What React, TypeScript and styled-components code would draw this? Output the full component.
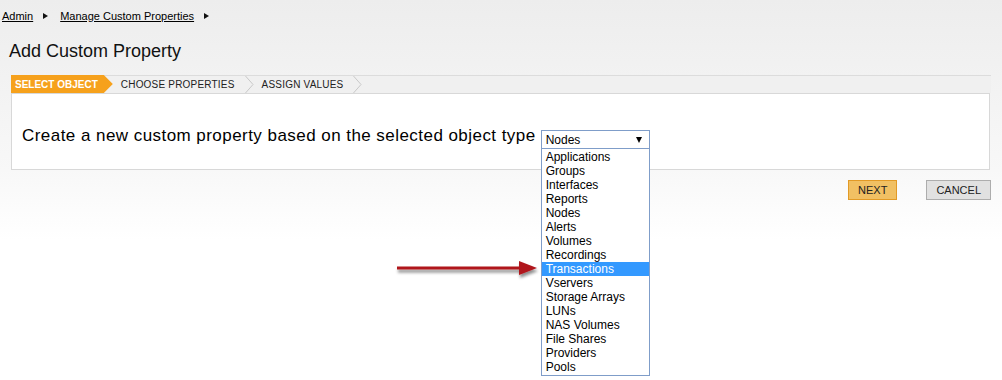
import styled, { createGlobalStyle } from "styled-components";

const GlobalStyle = createGlobalStyle`
  html, body {
    margin: 0;
    padding: 0;
  }

  body {
    font-family: "Liberation Sans", Arial, sans-serif;
    color: #000;
  }
`;

const Page = styled.div`
  position: relative;
  min-height: 380px;
  background: linear-gradient(to bottom, #ededed 0px, #f8f8f8 170px, #ffffff 240px);
  overflow: hidden;
`;

const Breadcrumb = styled.div`
  display: flex;
  align-items: center;
  padding: 9px 2px;
  font-size: 11px;
  line-height: 14px;
`;

const Crumb = styled.a`
  color: #000;
  text-decoration: underline;
  cursor: pointer;
`;

const CrumbArrow = styled.span`
  display: inline-block;
  width: 0;
  height: 0;
  margin: 0 12px 0 10px;
  border-top: 3.5px solid transparent;
  border-bottom: 3.5px solid transparent;
  border-left: 5px solid #111;
`;

const Title = styled.h1`
  margin: 8px 0 13px 9px;
  font-size: 18px;
  line-height: 22px;
  font-weight: normal;
  color: #111;
`;

const Wizard = styled.div`
  margin: 0 11px;
`;

const StepBar = styled.div`
  display: flex;
  height: 17px;
  background: #f0f0f0;
  border-top: 1px solid #dcdcdc;
`;

const Step = styled.div<{ $active?: boolean }>`
  display: flex;
  align-items: center;
  height: 17px;
  font-size: 10px;
  letter-spacing: ${(p) => (p.$active ? "0" : "0.2px")};
  color: ${(p) => (p.$active ? "#fff" : "#222")};
  font-weight: ${(p) => (p.$active ? "bold" : "normal")};
`;

const ActiveLabel = styled.span`
  display: flex;
  align-items: center;
  height: 17px;
  margin-top: -1px;
  padding: 1px 15px 0 4px;
  background: #f6a11c;
  clip-path: polygon(0 0, calc(100% - 9px) 0, 100% 50%, calc(100% - 9px) 100%, 0 100%);
`;

const Label = styled.span`
  padding: 0 10px 0 8px;
`;

const Panel = styled.div`
  display: flex;
  align-items: flex-start;
  height: 75px;
  padding: 0 10px;
  background: #fff;
  border: 1px solid #d8d8d8;
  margin-right: 1px;
`;

const Prompt = styled.span`
  margin: 32px 5px 0 0;
  font-size: 17px;
  line-height: 20px;
  letter-spacing: 0.45px;
`;

const SelectWrap = styled.div`
  position: relative;
  width: 109px;
  margin-top: 36px;
`;

const SelectBox = styled.div`
  display: flex;
  align-items: center;
  justify-content: space-between;
  box-sizing: border-box;
  height: 19px;
  padding: 0 7px 0 4px;
  border: 1px solid #7f9dc9;
  background: #fff;
  font-size: 12px;
`;

const Caret = styled.span`
  width: 0;
  height: 0;
  border-left: 3.5px solid transparent;
  border-right: 3.5px solid transparent;
  border-top: 6px solid #000;
`;

const OptionList = styled.ul`
  position: absolute;
  top: 18px;
  left: 0;
  z-index: 2;
  box-sizing: border-box;
  width: 109px;
  margin: 0;
  padding: 1px 0;
  list-style: none;
  background: #fff;
  border: 1px solid #7f9dc9;
`;

const Option = styled.li<{ $selected?: boolean }>`
  height: 14px;
  line-height: 14px;
  padding-left: 4px;
  font-size: 12px;
  background: ${(p) => (p.$selected ? "#3399ff" : "transparent")};
  color: ${(p) => (p.$selected ? "#fff" : "#000")};
`;

const Actions = styled.div`
  display: flex;
  justify-content: flex-end;
  gap: 29px;
  margin: 10px 11px 0 0;
`;

const Button = styled.button<{ $primary?: boolean }>`
  box-sizing: border-box;
  height: 20px;
  padding: 0 9px;
  font-family: "Liberation Sans", Arial, sans-serif;
  font-size: 11px;
  color: #222;
  background: ${(p) => (p.$primary ? "#f1c063" : "#e1e1e1")};
  border: 1px solid ${(p) => (p.$primary ? "#e29a26" : "#adadad")};
  border-radius: 0;
`;

const Pointer = styled.svg`
  position: absolute;
  left: 395px;
  top: 254px;
  z-index: 3;
  overflow: visible;
`;

function Chevron() {
  return (
    <svg width="9" height="17" viewBox="0 0 9 17">
      <polyline points="0.5,0 8,8.5 0.5,17" fill="none" stroke="#c8c8c8" strokeWidth="1" />
    </svg>
  );
}

const objectTypes = [
  "Applications",
  "Groups",
  "Interfaces",
  "Reports",
  "Nodes",
  "Alerts",
  "Volumes",
  "Recordings",
  "Transactions",
  "Vservers",
  "Storage Arrays",
  "LUNs",
  "NAS Volumes",
  "File Shares",
  "Providers",
  "Pools",
];

export default function App() {
  return (
    <Page>
      <GlobalStyle />
      <Breadcrumb>
        <Crumb>Admin</Crumb>
        <CrumbArrow />
        <Crumb>Manage Custom Properties</Crumb>
        <CrumbArrow />
      </Breadcrumb>

      <Title>Add Custom Property</Title>

      <Wizard>
        <StepBar>
          <Step $active>
            <ActiveLabel>SELECT OBJECT</ActiveLabel>
          </Step>
          <Step>
            <Label>CHOOSE PROPERTIES</Label>
            <Chevron />
          </Step>
          <Step>
            <Label>ASSIGN VALUES</Label>
            <Chevron />
          </Step>
        </StepBar>
        <Panel>
          <Prompt>Create a new custom property based on the selected object type</Prompt>
          <SelectWrap>
            <SelectBox>
              <span>Nodes</span>
              <Caret />
            </SelectBox>
            <OptionList>
              {objectTypes.map((t) => (
                <Option key={t} $selected={t === "Transactions"}>
                  {t}
                </Option>
              ))}
            </OptionList>
          </SelectWrap>
        </Panel>
      </Wizard>

      <Actions>
        <Button $primary>NEXT</Button>
        <Button>CANCEL</Button>
      </Actions>

      <Pointer width="150" height="30" viewBox="0 0 150 30">
        <defs>
          <filter id="arrowShadow" x="-10%" y="-50%" width="120%" height="250%">
            <feDropShadow dx="1" dy="3" stdDeviation="1.5" floodColor="#000" floodOpacity="0.45" />
          </filter>
        </defs>
        <g filter="url(#arrowShadow)">
          <line x1="2" y1="14" x2="128" y2="14" stroke="#b0161c" strokeWidth="3" />
          <polygon points="124,7 142,14 124,21" fill="#b0161c" />
        </g>
      </Pointer>
    </Page>
  );
}
